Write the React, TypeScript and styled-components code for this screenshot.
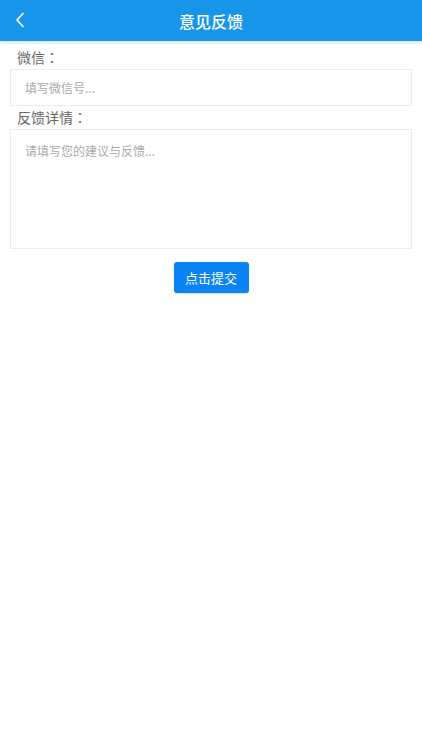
import React from 'react';
import styled, { createGlobalStyle } from 'styled-components';

const GlobalStyle = createGlobalStyle`
  html, body {
    margin: 0;
    padding: 0;
    background: #ffffff;
    font-family: "Noto Sans CJK SC", "Noto Sans", Roboto, sans-serif;
  }
  * {
    box-sizing: border-box;
  }
`;

export default function App() {
  return (
    <Page>
      <GlobalStyle />
      <Header>
        <BackButton aria-label="back">
          <svg width="10" height="16" viewBox="0 0 10 16" fill="none">
            <path d="M8 1.5L2 8l6 6.5" stroke="#ffffff" strokeWidth="1.7" strokeLinecap="round" strokeLinejoin="round" />
          </svg>
        </BackButton>
        <Title>意见反馈</Title>
      </Header>
      <Form>
        <Label>微信：</Label>
        <TextInput placeholder="填写微信号..." />
        <Label>反馈详情：</Label>
        <TextArea placeholder="请填写您的建议与反馈..." />
        <SubmitRow>
          <SubmitButton>点击提交</SubmitButton>
        </SubmitRow>
      </Form>
    </Page>
  );
}

const Page = styled.div`
  width: 422px;
  min-height: 750px;
  background: #ffffff;
`;

const Header = styled.div`
  position: relative;
  display: flex;
  align-items: center;
  justify-content: center;
  height: 41px;
  background: #1795e9;
  box-shadow: 0 1px 4px rgba(0, 0, 0, 0.18);
`;

const BackButton = styled.button`
  position: absolute;
  left: 15px;
  top: 12px;
  padding: 0;
  border: none;
  background: transparent;
  display: flex;
`;

const Title = styled.h1`
  margin: 0;
  font-size: 16px;
  font-weight: 500;
  color: #ffffff;
`;

const Form = styled.div`
  display: flex;
  flex-direction: column;
  padding: 6px 10px 0;
`;

const Label = styled.div`
  font-family: "Noto Sans CJK TC", "Noto Sans CJK SC", sans-serif;
  font-size: 14px;
  line-height: 20px;
  color: #666666;
  padding-left: 7px;
  margin-bottom: 2px;
`;

const fieldBase = `
  width: 100%;
  border: 1px solid #ececec;
  background: #ffffff;
  font-family: "Noto Sans CJK SC", "Noto Sans", sans-serif;
  font-size: 12px;
  color: #333333;
  outline: none;
  &::placeholder {
    color: #aaaaaa;
  }
`;

const TextInput = styled.input`
  ${fieldBase}
  height: 37px;
  padding: 0 14px;
  margin-bottom: 1px;
`;

const TextArea = styled.textarea`
  ${fieldBase}
  height: 120px;
  padding: 12px 14px;
  resize: none;
`;

const SubmitRow = styled.div`
  display: flex;
  justify-content: center;
  padding-top: 13px;
`;

const SubmitButton = styled.button`
  width: 75px;
  height: 31px;
  border: none;
  border-radius: 3px;
  background: #0a84f5;
  color: #ffffff;
  font-family: "Noto Sans CJK SC", "Noto Sans", sans-serif;
  font-size: 13px;
  box-shadow: 0 1px 2px rgba(0, 0, 0, 0.15);
`;
